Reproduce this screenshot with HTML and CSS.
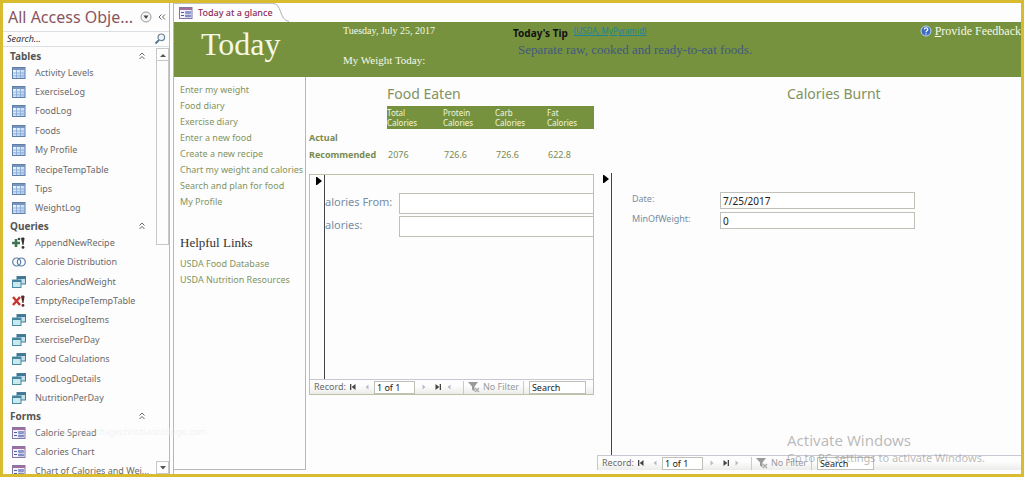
FILE: index.html
```html
<!DOCTYPE html>
<html lang="en">
<head>
<meta charset="utf-8">
<title>Today at a glance</title>
<link rel="stylesheet" href="styles.css">
</head>
<body>
<svg class="defs" aria-hidden="true">
  <defs>
    <linearGradient id="cell" x1="0" y1="0" x2="1" y2="1"><stop offset="0" stop-color="#fff"/><stop offset="1" stop-color="#a9c9f0"/></linearGradient>
    <symbol id="i-table" viewBox="0 0 14 12">
      <rect x=".5" y=".5" width="12.500" height="11" fill="url(#cell)" stroke="#5f7fa8"/>
      <path d="M1 1h12v2H1z" fill="#7895bd"/><path d="M1 6h12M1 8.800h12M4.500 3v8M8.500 3v8" stroke="#84a6d0" stroke-width=".8"/>
    </symbol>
    <symbol id="i-query" viewBox="0 0 14 12">
      <rect x="5" y=".5" width="8.500" height="7.500" fill="#c4dfec" stroke="#4b7c95"/><path d="M5 1h8.500v2H5z" fill="#3f7896"/>
      <rect x=".5" y="4" width="8.500" height="7.500" fill="#c9e9ee" stroke="#4b8ba0"/><path d="M.5 4H9v2H.5z" fill="#44839f"/>
    </symbol>
    <symbol id="i-form" viewBox="0 0 14 12">
      <rect x=".5" y=".5" width="12.500" height="11" fill="#f5f1fc" stroke="#8177a5"/><path d="M1 1h12v2H1z" fill="#a56c9e"/>
      <path d="M2 5.500h3M2 8.500h3" stroke="#4c5e9e"/><path d="M6.500 4.500h5v2h-5zM6.500 8h5v2h-5z" fill="#8d9bd8" stroke="#5966a6" stroke-width=".5"/>
    </symbol>
    <symbol id="i-append" viewBox="0 0 14 12">
      <path d="M4 2v8M0 6h8" stroke="#3e7652" stroke-width="2.600"/><path d="M9 1.500c0-1.500 3.500-1.500 3.500 0L11.500 8h-1z" fill="#333"/><circle cx="11" cy="10.400" r="1.400" fill="#333"/><circle cx="7" cy="2" r="1.300" fill="#444"/>
    </symbol>
    <symbol id="i-delete" viewBox="0 0 14 12">
      <path d="M1 2l7 8M8 2l-7 8" stroke="#c9342d" stroke-width="2.400"/><path d="M9 1.500c0-1.500 3.500-1.500 3.500 0L11.500 8h-1z" fill="#542d2d"/><circle cx="11" cy="10.400" r="1.400" fill="#542d2d"/>
    </symbol>
    <symbol id="i-union" viewBox="0 0 14 12">
      <circle cx="4.700" cy="6" r="4" fill="none" stroke="#5a7fa6" stroke-width="1.200"/><circle cx="9.300" cy="6" r="4" fill="none" stroke="#5a7fa6" stroke-width="1.200"/>
    </symbol>
    <symbol id="i-up2" viewBox="0 0 8 8"><path d="M1.500 3.500L4 1l2.500 2.500M1.500 7L4 4.500 6.500 7" fill="none" stroke="#666" stroke-width="1"/></symbol>
    <symbol id="i-left2" viewBox="0 0 8 8"><path d="M3.500 1.500L1 4l2.500 2.500M7 1.500L4.500 4 7 6.500" fill="none" stroke="#666" stroke-width="1"/></symbol>
    <symbol id="i-first" viewBox="0 0 8 8"><path d="M1 1h1.300v6H1zM6.500 1v6L2.700 4z" fill="#444"/></symbol>
    <symbol id="i-last" viewBox="0 0 8 8"><path d="M5.700 1H7v6H5.700zM1.500 1v6l3.800-3z" fill="#444"/></symbol>
    <symbol id="i-prev" viewBox="0 0 8 8"><path d="M5.500 1.500v5L2.500 4z" fill="#b6bcc8"/></symbol>
    <symbol id="i-next" viewBox="0 0 8 8"><path d="M2.500 1.500v5l3-2.500z" fill="#b6bcc8"/></symbol>
    <symbol id="i-filter" viewBox="0 0 12 12"><path d="M0 1h10L6.500 5.500v5l-2.500-2v-3z" fill="#999"/><path d="M7 7l4 4M11 7l-4 4" stroke="#aaa" stroke-width="1.300"/></symbol>
    <symbol id="i-row" viewBox="0 0 6 10"><path d="M0 1h1l5 4-5 4H0z" fill="#000"/></symbol>
  </defs>
</svg>
<div class="app">
  <aside class="pane">
    <header class="pane-head">
      <h2 class="pane-title">All Access Obje...</h2>
      <button class="icon-btn" aria-label="Choose category"><svg class="round" viewBox="0 0 12 12"><circle cx="6" cy="6" r="5" fill="#f5f5f5" stroke="#999"/><path d="M3.500 4.500h5L6 8z" fill="#444"/></svg></button>
      <button class="icon-btn" aria-label="Collapse pane"><svg class="small"><use href="#i-left2"/></svg></button>
    </header>
    <form class="search">
      <input class="search-input" type="text" placeholder="Search..." aria-label="Search objects">
      <button class="icon-btn" type="button" aria-label="Search"><svg class="lens" viewBox="0 0 12 12"><circle cx="7.300" cy="4.300" r="3.300" fill="#edf5fb" stroke="#6d8497" stroke-width="1.200"/><path d="M5 7L1.500 10.500" stroke="#54718a" stroke-width="1.800"/></svg></button>
    </form>
    <div class="pane-body">
      <div class="groups">
        <h3 class="group-title">Tables <svg class="small"><use href="#i-up2"/></svg></h3>
        <ul class="items items-8">
          <li><svg class="ico"><use href="#i-table"/></svg>Activity Levels</li>
          <li><svg class="ico"><use href="#i-table"/></svg>ExerciseLog</li>
          <li><svg class="ico"><use href="#i-table"/></svg>FoodLog</li>
          <li><svg class="ico"><use href="#i-table"/></svg>Foods</li>
          <li><svg class="ico"><use href="#i-table"/></svg>My Profile</li>
          <li><svg class="ico"><use href="#i-table"/></svg>RecipeTempTable</li>
          <li><svg class="ico"><use href="#i-table"/></svg>Tips</li>
          <li><svg class="ico"><use href="#i-table"/></svg>WeightLog</li>
        </ul>
        <h3 class="group-title">Queries <svg class="small"><use href="#i-up2"/></svg></h3>
        <ul class="items items-9">
          <li><svg class="ico"><use href="#i-append"/></svg>AppendNewRecipe</li>
          <li><svg class="ico"><use href="#i-union"/></svg>Calorie Distribution</li>
          <li><svg class="ico"><use href="#i-query"/></svg>CaloriesAndWeight</li>
          <li><svg class="ico"><use href="#i-delete"/></svg>EmptyRecipeTempTable</li>
          <li><svg class="ico"><use href="#i-query"/></svg>ExerciseLogItems</li>
          <li><svg class="ico"><use href="#i-query"/></svg>ExercisePerDay</li>
          <li><svg class="ico"><use href="#i-query"/></svg>Food Calculations</li>
          <li><svg class="ico"><use href="#i-query"/></svg>FoodLogDetails</li>
          <li><svg class="ico"><use href="#i-query"/></svg>NutritionPerDay</li>
        </ul>
        <h3 class="group-title">Forms <svg class="small"><use href="#i-up2"/></svg></h3>
        <ul class="items items-3">
          <li><svg class="ico"><use href="#i-form"/></svg>Calorie Spread</li>
          <li><svg class="ico"><use href="#i-form"/></svg>Calories Chart</li>
          <li><svg class="ico"><use href="#i-form"/></svg>Chart of Calories and Wei...</li>
        </ul>
      </div>
      <div class="scrollbar">
        <button class="scroll-btn" aria-label="Scroll up"><svg class="arrow" viewBox="0 0 6 4"><path d="M0 4l3-3 3 3z" fill="#555"/></svg></button>
        <div class="thumb"></div>
        <button class="scroll-btn scroll-down" aria-label="Scroll down"><svg class="arrow" viewBox="0 0 6 4"><path d="M0 0h6L3 3.500z" fill="#555"/></svg></button>
      </div>
    </div>
  </aside>

  <main class="doc">
    <div class="tabs">
      <button class="tab"><svg class="ico"><use href="#i-form"/></svg>Today at a glance</button>
      <svg class="tab-slope" viewBox="0 0 16 19"><path d="M0 .5C9 .5 6 17 16 18.500" fill="none" stroke="#b1b1bb"/></svg>
    </div>
    <header class="banner">
      <h1 class="banner-title">Today</h1>
      <div class="banner-info">
        <div>Tuesday, July 25, 2017</div>
        <div class="weight">My Weight Today:</div>
      </div>
      <div class="tip">
        <div class="tip-head"><strong>Today's Tip</strong><a class="tip-link" href="#">(USDA, MyPyramid)</a></div>
        <p class="tip-text">Separate raw, cooked and ready-to-eat foods.</p>
      </div>
      <a class="feedback" href="#"><svg class="help" viewBox="0 0 12 12"><circle cx="6" cy="6" r="5" fill="#3b6bc4" stroke="#bcd3f2"/><path d="M4.300 4.600c0-2.200 3.500-2.200 3.500-.1C7.800 5.800 6 5.700 6 7.200M6 8.200v1.200" fill="none" stroke="#fff" stroke-width="1.200"/></svg><span><u>P</u>rovide Feedback</span></a>
    </header>
    <div class="work">
      <nav class="links">
        <a href="#">Enter my weight</a>
        <a href="#">Food diary</a>
        <a href="#">Exercise diary</a>
        <a href="#">Enter a new food</a>
        <a href="#">Create a new recipe</a>
        <a href="#">Chart my weight and calories</a>
        <a href="#">Search and plan for food</a>
        <a href="#">My Profile</a>
        <h3 class="links-title">Helpful Links</h3>
        <a href="#">USDA Food Database</a>
        <a href="#">USDA Nutrition Resources</a>
      </nav>
      <section class="eaten">
        <h2 class="section-title eaten-title">Food Eaten</h2>
        <table class="totals">
          <colgroup><col class="col-name"><col class="col-total"><col class="col-part"><col class="col-part"><col></colgroup>
          <thead><tr><td></td><th>Total<br>Calories</th><th>Protein<br>Calories</th><th>Carb<br>Calories</th><th>Fat<br>Calories</th></tr></thead>
          <tbody>
            <tr class="actual"><th>Actual</th><td></td><td></td><td></td><td></td></tr>
            <tr><th>Recommended</th><td>2076</td><td>726.6</td><td>726.6</td><td>622.8</td></tr>
          </tbody>
        </table>
        <div class="subform framed">
          <div class="record">
            <div class="selector"><svg class="row-mark"><use href="#i-row"/></svg></div>
            <div class="fields">
              <label for="from">alories From:</label><input id="from" type="text">
              <label for="cal">alories:</label><input id="cal" type="text">
            </div>
          </div>
          <div class="recnav">
            <span>Record:</span>
            <button aria-label="First record"><svg class="small"><use href="#i-first"/></svg></button>
            <button aria-label="Previous record"><svg class="small"><use href="#i-prev"/></svg></button>
            <input class="pos" type="text" value="1 of 1" aria-label="Current record">
            <button aria-label="Next record"><svg class="small"><use href="#i-next"/></svg></button>
            <button aria-label="Last record"><svg class="small"><use href="#i-last"/></svg></button>
            <button class="new" aria-label="New record"><svg class="small"><use href="#i-prev"/></svg></button>
            <button class="filter" disabled><svg class="funnel"><use href="#i-filter"/></svg>No Filter</button>
            <input class="find" type="text" value="Search" aria-label="Search records">
          </div>
        </div>
      </section>
      <section class="burnt">
        <h2 class="section-title burnt-title">Calories Burnt</h2>
        <div class="subform">
          <div class="record">
            <div class="selector"><svg class="row-mark"><use href="#i-row"/></svg></div>
            <div class="fields fields-wide">
              <label for="date">Date:</label><input id="date" type="text" value="7/25/2017">
              <label for="min">MinOfWeight:</label><input id="min" type="text" value="0">
            </div>
          </div>
          <div class="recnav">
            <span>Record:</span>
            <button aria-label="First record"><svg class="small"><use href="#i-first"/></svg></button>
            <button aria-label="Previous record"><svg class="small"><use href="#i-prev"/></svg></button>
            <input class="pos" type="text" value="1 of 1" aria-label="Current record">
            <button aria-label="Next record"><svg class="small"><use href="#i-next"/></svg></button>
            <button aria-label="Last record"><svg class="small"><use href="#i-last"/></svg></button>
            <button class="new" aria-label="New record"><svg class="small"><use href="#i-next"/></svg></button>
            <button class="filter" disabled><svg class="funnel"><use href="#i-filter"/></svg>No Filter</button>
            <input class="find" type="text" value="Search" aria-label="Search records">
          </div>
        </div>
      </section>
    </div>
  </main>
  <div class="activate">
    <div class="activate-title">Activate Windows</div>
    <div>Go to PC settings to activate Windows.</div>
  </div>
  <div class="site-mark">www.heritagechristiancollege.com</div>
</div>
</body>
</html>
```
FILE: styles.css
```css
* { box-sizing: border-box; }
body { margin: 0; font: 9px/12px "Noto Sans", "Open Sans", sans-serif; color: #6a6a6a; background: #fdfdfd; }
h1, h2, h3, p, ul { margin: 0; padding: 0; font-weight: normal; }
ul { list-style: none; }
button { border: 0; padding: 0; background: none; font: inherit; color: inherit; display: flex; align-items: center; }
input { font: inherit; color: #222; border: 1px solid #c0c0b8; background: #fff; padding: 0 2px; min-width: 0; outline: 0; }
a { text-decoration: none; color: inherit; }
svg { display: block; flex: none; }
.defs { position: absolute; width: 0; height: 0; }
.small { width: 8px; height: 8px; }
.ico { width: 14px; height: 12px; }
.app { position: relative; display: flex; height: 100vh; border: 3px solid #d9bb2f; overflow: hidden; }

.pane { width: 167px; flex: none; display: flex; flex-direction: column; border-right: 1px solid #b5b9c2; }
.pane-head { display: flex; align-items: center; height: 28px; padding-left: 5px; gap: 6px; }
.pane-title { flex: none; width: 126px; font-size: 16px; line-height: 28px; color: #895560; white-space: nowrap; }
.round { width: 12px; height: 12px; }
.search { display: flex; align-items: center; height: 16px; border: 1px solid #dbe0e5; border-width: 1px 0; padding-right: 3px; }
.search-input { flex: 1; border: 0; padding: 0 4px; font-style: italic; background: none; }
.search-input::placeholder { color: #333; opacity: 1; }
.lens { width: 12px; height: 12px; }
.pane-body { flex: 1; min-height: 0; display: flex; padding-top: 1px; }
.groups { flex: 1; overflow: hidden; padding-left: 7px; }
.group-title { display: flex; align-items: center; justify-content: space-between; height: 15px; padding-right: 10px; font-size: 10px; font-weight: bold; color: #555; }
.items { display: grid; grid-auto-rows: 1fr; white-space: nowrap; }
.items li { display: flex; align-items: center; gap: 9px; padding-left: 2px; }
.items-8 { height: 155px; }
.items-9 { height: 175px; }
.items-3 { height: 58px; }
.scrollbar { width: 13px; flex: none; display: flex; flex-direction: column; }
.scroll-btn { height: 13px; justify-content: center; border: 1px solid #c8c8c8; }
.scroll-down { margin-top: auto; }
.arrow { width: 6px; height: 4px; }
.thumb { height: 184px; border: 1px solid #c8c8c8; border-top: 0; }

.doc { flex: 1; min-width: 0; margin-left: 3px; border-left: 1px solid #b5b9b0; display: flex; flex-direction: column; }
.tabs { display: flex; height: 19px; flex: none; }
.tab { gap: 5px; padding-left: 5px; border-top: 1px solid #c4c4cc; font-weight: 500; color: #8b2c55; }
.tab-slope { width: 16px; height: 19px; }
.banner { flex: none; display: grid; grid-template-columns: 169px 170px 1fr auto; height: 55px; padding-top: 3px; background: #76923f; font-family: "Liberation Serif", serif; color: #f5f8e5; white-space: nowrap; overflow: hidden; }
.banner-title { font: 32px/38px "Liberation Serif", serif; padding-left: 27px; }
.banner-info { font-size: 10px; }
.weight { margin-top: 17px; font-size: 11px; }
.tip-head { display: flex; gap: 6px; font-family: "Noto Sans", sans-serif; font-size: 10px; line-height: 16px; color: #111; }
.tip-link { font-size: 8px; line-height: 12px; color: #1f8299; text-decoration: underline; }
.tip-text { padding-left: 5px; font-size: 13px; line-height: 18px; color: #42587f; }
.feedback { display: flex; gap: 3px; align-items: center; height: 12px; font-size: 12px; }
.help { width: 12px; height: 12px; }

.work { flex: 1; min-height: 0; display: flex; gap: 3px; }
.links { width: 132px; flex: none; margin-bottom: 4px; padding: 5px 2px 4px 6px; border: 1px solid #b6b6bc; border-width: 0 1px 1px 0; color: #82945f; }
.links a { display: block; line-height: 16px; white-space: nowrap; overflow: hidden; }
.links-title { margin: 24px 0 4px; font: 13px/18px "Liberation Serif", serif; color: #333; }
.section-title { font-size: 14px; line-height: 18px; color: #82925f; }
.eaten { width: 285px; flex: none; padding-top: 8px; }
.eaten-title { padding-left: 78px; }
.totals { width: 100%; margin-top: 3px; border-collapse: collapse; table-layout: fixed; color: #788b51; }
.totals th, .totals td { padding: 0; text-align: left; }
.col-name { width: 78px; }
.col-total { width: 56px; }
.col-part { width: 52px; }
.totals thead th { height: 23px; background: #76923f; color: #f1f5df; font-size: 8px; font-weight: normal; line-height: 10px; }
.totals tbody th { height: 16px; line-height: 16px; }
.totals .actual th { height: 18px; }
.totals tbody td { padding-left: 1px; }
.eaten .subform { margin-top: 11px; height: 221px; }
.subform { display: flex; flex-direction: column; }
.framed { border: 1px solid #bfc0a4; }
.record { flex: 1; min-height: 0; display: flex; }
.selector { width: 15px; flex: none; padding: 1px 2px 0 6px; border-right: 1px solid #444; }
.row-mark { width: 6px; height: 10px; }
.fields { flex: 1; min-width: 0; display: grid; grid-template-columns: 74px 1fr; grid-auto-rows: 21px; gap: 2px 0; padding-top: 18px; align-items: stretch; font-size: 11px; line-height: 18px; color: #758ea4; }
.framed .fields input { border-right: 0; }
.recnav { flex: none; display: flex; align-items: center; height: 15px; padding-left: 4px; border-top: 1px solid #c8c8d2; background: linear-gradient(#fdfdfd 40%, #ececea); white-space: nowrap; }
.recnav button { padding: 0 3px; }
.recnav .pos { width: 41px; height: 13px; margin-right: 2px; }
.recnav .new { padding: 0; }
.recnav .filter { height: 13px; gap: 3px; margin-left: 10px; padding: 0 4px; border: 1px solid #c9c9ce; border-width: 0 1px; color: #999; }
.funnel { width: 12px; height: 12px; }
.recnav .find { width: 57px; height: 13px; margin-left: 5px; }
.burnt { flex: 1; min-width: 0; display: flex; flex-direction: column; padding-top: 8px; margin-bottom: 4px; }
.burnt-title { padding-left: 190px; }
.burnt .subform { flex: 1; margin-top: 70px; }
.burnt .recnav { border-left: 1px solid #c8c8d2; }
.fields-wide { grid-template-columns: 88px 195px; grid-auto-rows: 17px; gap: 3px 0; padding: 19px 0 0 20px; font-size: 9px; line-height: 14px; }
.fields-wide input { font-size: 10px; }
.activate { position: absolute; right: 26px; bottom: 8px; font-size: 11px; line-height: 16px; color: rgba(120, 120, 120, .5); pointer-events: none; width: 208px; }
.activate-title { font-size: 15px; line-height: 20px; }
.site-mark { position: absolute; left: 58px; bottom: 36px; color: rgba(235, 235, 235, .6); pointer-events: none; }
```
